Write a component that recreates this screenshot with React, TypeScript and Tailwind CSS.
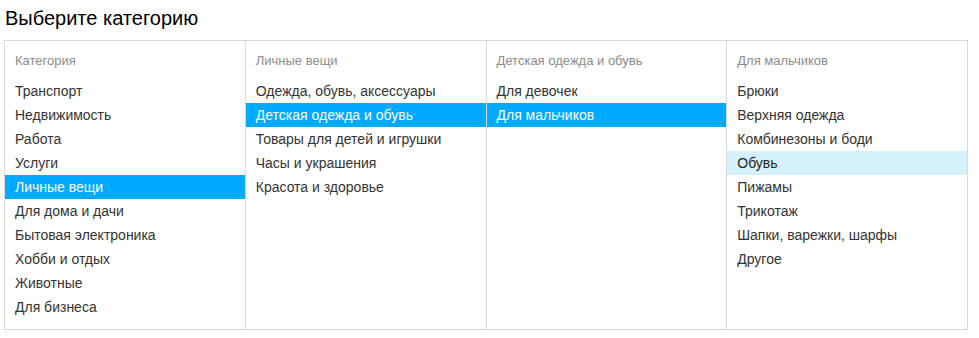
import React from 'react';

interface Column {
    title: string;
    items: string[];
    active?: number;
    hover?: number;
}

const columns: Column[] = [
    {
        title: 'Категория',
        items: ['Транспорт', 'Недвижимость', 'Работа', 'Услуги', 'Личные вещи', 'Для дома и дачи', 'Бытовая электроника', 'Хобби и отдых', 'Животные', 'Для бизнеса'],
        active: 4,
    },
    {
        title: 'Личные вещи',
        items: ['Одежда, обувь, аксессуары', 'Детская одежда и обувь', 'Товары для детей и игрушки', 'Часы и украшения', 'Красота и здоровье'],
        active: 1,
    },
    {
        title: 'Детская одежда и обувь',
        items: ['Для девочек', 'Для мальчиков'],
        active: 1,
    },
    {
        title: 'Для мальчиков',
        items: ['Брюки', 'Верхняя одежда', 'Комбинезоны и боди', 'Обувь', 'Пижамы', 'Трикотаж', 'Шапки, варежки, шарфы', 'Другое'],
        hover: 3,
    },
];

const App: React.FC = () => {
    return (
        <div className="min-h-screen bg-white font-['Liberation_Sans',Arial,sans-serif]">
            <h1 className="pl-[5px] pt-[4px] h-[40px] text-[20px] leading-[28px] text-black">Выберите категорию</h1>
            <div className="ml-[4px] w-[964px] h-[290px] border border-[#d9d9d9] flex">
                {columns.map((col, ci) => (
                    <div key={ci} className={`flex-1 pt-[10px] ${ci < columns.length - 1 ? 'border-r border-[#d9d9d9]' : ''}`}>
                        <div className="px-[10px] h-[28px] text-[13px] leading-[20px] text-[#8c8c8c]">{col.title}</div>
                        <ul>
                            {col.items.map((item, i) => (
                                <li
                                    key={item}
                                    className={`px-[10px] h-[24px] text-[14px] leading-[24px] ${
                                        i === col.active
                                            ? 'bg-[#00aaff] text-white'
                                            : i === col.hover
                                            ? 'bg-[#d4f1fc] text-[#222]'
                                            : 'text-[#333]'
                                    }`}
                                >
                                    {item}
                                </li>
                            ))}
                        </ul>
                    </div>
                ))}
            </div>
        </div>
    );
};

export default App;
